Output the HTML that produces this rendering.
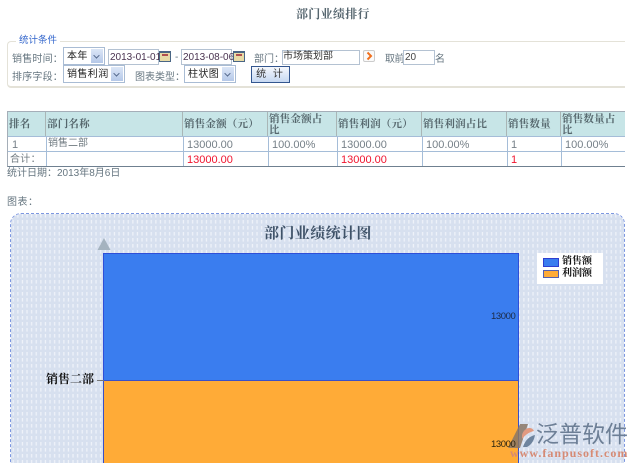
<!DOCTYPE html>
<html lang="zh">
<head>
<meta charset="utf-8">
<title>部门业绩排行</title>
<style>
html,body{margin:0;padding:0;background:#fff}
body{position:relative;width:638px;height:468px;overflow:hidden;font-family:"Liberation Sans","Noto Sans CJK SC",sans-serif;font-size:10px;color:#667680}
.a{position:absolute;white-space:nowrap;line-height:12px}
.sf{font-family:"Liberation Serif","Noto Serif CJK SC",serif;font-weight:bold}
.box{position:absolute;box-sizing:border-box;background:#fff;border:1px solid #b4c2d2;color:#333;white-space:nowrap}
.sel{position:absolute;box-sizing:border-box;background:#fff;border:1px solid #a9bcd4;color:#222;font-size:10px;line-height:18px;padding-left:3px;height:18px;letter-spacing:.4px}
.sel i{position:absolute;right:1px;top:1px;bottom:1px;width:12px;background:linear-gradient(#dbe6f7,#b5c8e8)}
.sel i:after{content:"";position:absolute;left:3px;top:4px;width:4px;height:4px;border-right:1.5px solid #4d6185;border-bottom:1.5px solid #4d6185;transform:rotate(45deg) scale(.9);transform-origin:center}
.cal{position:absolute;width:12px;height:11px;box-sizing:border-box;border:1px solid #4a6685;border-top-width:2px;background:#e8dba6;z-index:2}
.cal:after{content:"";position:absolute;left:2px;top:1px;width:6px;height:2px;background:#b05050}
.cell{position:absolute;box-sizing:border-box;white-space:normal;overflow:hidden}
.h{background:#c7e5e7;font-family:"Liberation Serif","Noto Serif CJK SC",serif;font-weight:bold;color:#55666c;font-size:10.5px;line-height:11px;letter-spacing:.2px;padding-left:1px;display:flex;align-items:center;border-right:1px solid #a9b6b6;white-space:nowrap}
.r{color:#768088;font-size:11px;line-height:13px;padding-left:3px}
.red{color:#f0142e}
.vl{position:absolute;width:1px;background:#a5bdd8}
.hl{position:absolute;height:1px;background:#a5bdd8}
#chart{position:absolute;left:10px;top:213px;width:614.5px;height:255px;box-sizing:border-box;border:1px dashed #7d97e0;border-bottom:0;border-radius:11px 11px 0 0;overflow:hidden}
#pat{position:absolute;inset:0}
</style>
</head>
<body>
<div class="a sf" style="left:296px;top:7px;font-size:12px;line-height:14px;color:#56666f;letter-spacing:.3px">部门业绩排行</div>

<div style="position:absolute;left:7px;top:41px;width:618px;height:47px;box-sizing:border-box;border:1px solid #e4e2d8;border-width:1px 0 2px 1px;border-radius:4px 0 0 4px"></div>
<div class="a" style="left:16px;top:35px;background:#fff;padding:0 3px;color:#3366cc;font-size:9.5px">统计条件</div>

<div class="a" style="left:12px;top:54px;letter-spacing:.2px">销售时间：</div>
<div class="sel" style="left:63px;top:47px;width:42px">本年<i></i></div>
<div class="box" style="left:108px;top:49px;width:51px;height:16px;font-size:10px;line-height:15px;padding-left:1px;color:#4a3350">2013-01-01</div>
<div class="cal" style="left:159px;top:51px"></div>
<div class="a" style="left:175px;top:52px">-</div>
<div class="box" style="left:181px;top:49px;width:51px;height:16px;font-size:10px;line-height:15px;padding-left:1px;color:#4a3350">2013-08-06</div>
<div class="cal" style="left:233px;top:51px"></div>
<div class="a" style="left:254px;top:54px">部门：</div>
<div class="box" style="left:282px;top:50px;width:78px;height:15px;font-size:10px;line-height:12px;padding-left:0;color:#333">市场策划部</div>
<div style="position:absolute;left:363px;top:50px;width:12px;height:12px;box-sizing:border-box;border:1px solid #ccc;border-radius:2px;background:#fafafa"></div>
<svg style="position:absolute;left:363px;top:50px" width="12" height="12"><path d="M4.5 2.5L8 6L4.5 9.5" fill="none" stroke="#f0701e" stroke-width="2"/></svg>
<div class="a" style="left:385px;top:54px;letter-spacing:-.5px">取前</div>
<div class="box" style="left:403px;top:50px;width:32px;height:15px;font-size:10px;line-height:13px;padding-left:1px;color:#444">20</div>
<div class="a" style="left:435px;top:54px">名</div>

<div class="a" style="left:12px;top:72px;letter-spacing:.2px">排序字段：</div>
<div class="sel" style="left:63px;top:65px;width:62px">销售利润<i></i></div>
<div class="a" style="left:135px;top:72px">图表类型：</div>
<div class="sel" style="left:184px;top:65px;width:52px">柱状图<i></i></div>
<div style="position:absolute;left:251px;top:66px;width:39px;height:17px;box-sizing:border-box;border:1px solid #33568f;background:linear-gradient(#f5f8fd,#c6d8f2);text-align:center;font-size:10px;line-height:15px;color:#333;letter-spacing:2px">统 计</div>

<!-- table -->
<div style="position:absolute;left:7px;top:111px;width:618px;height:56px;box-sizing:border-box;border:1px solid #a5aeb8;border-width:1px 0 1px 1px;border-bottom-color:#6f8090;background:#fff"></div>
<div class="cell h" style="left:8px;top:112px;width:38px;height:25px">排名</div>
<div class="cell h" style="left:46px;top:112px;width:137px;height:25px">部门名称</div>
<div class="cell h" style="left:183px;top:112px;width:85px;height:25px">销售金额（元）</div>
<div class="cell h" style="left:268px;top:112px;width:69px;height:25px"><span>销售金额占<br>比</span></div>
<div class="cell h" style="left:337px;top:112px;width:85px;height:25px">销售利润（元）</div>
<div class="cell h" style="left:422px;top:112px;width:85px;height:25px">销售利润占比</div>
<div class="cell h" style="left:507px;top:112px;width:54px;height:25px">销售数量</div>
<div class="cell h" style="left:561px;top:112px;width:64px;height:25px;border-right:0"><span>销售数量占<br>比</span></div>
<div class="hl" style="left:8px;top:136px;width:617px"></div>
<div class="hl" style="left:8px;top:151px;width:617px"></div>
<div class="vl" style="left:46px;top:137px;height:29px"></div>
<div class="vl" style="left:183px;top:137px;height:29px"></div>
<div class="vl" style="left:268px;top:137px;height:29px"></div>
<div class="vl" style="left:337px;top:137px;height:29px"></div>
<div class="vl" style="left:422px;top:137px;height:29px"></div>
<div class="vl" style="left:507px;top:137px;height:29px"></div>
<div class="vl" style="left:561px;top:137px;height:29px"></div>

<div class="a r" style="left:9px;top:139px">1</div>
<div class="a" style="left:48px;top:138px;color:#6f7a80">销售二部</div>
<div class="a r" style="left:184px;top:139px">13000.00</div>
<div class="a r" style="left:269px;top:139px">100.00%</div>
<div class="a r" style="left:338px;top:139px">13000.00</div>
<div class="a r" style="left:423px;top:139px">100.00%</div>
<div class="a r" style="left:508px;top:139px">1</div>
<div class="a r" style="left:562px;top:139px">100.00%</div>

<div class="a" style="left:10px;top:154px;color:#6f7a80;letter-spacing:.3px">合计：</div>
<div class="a r red" style="left:184px;top:154px">13000.00</div>
<div class="a r red" style="left:338px;top:154px">13000.00</div>
<div class="a r red" style="left:508px;top:154px">1</div>

<div class="a" style="left:7px;top:168px;color:#667680">统计日期：2013年8月6日</div>
<div class="a" style="left:7px;top:197px;color:#667680;letter-spacing:.5px">图表：</div>

<!-- chart -->
<div id="chart">
<svg id="pat" width="614" height="255" style="position:absolute;left:0;top:0">
<defs><pattern id="p" width="4.6" height="6" patternUnits="userSpaceOnUse">
<rect width="4.6" height="6" fill="#d7e0ef"/>
<rect x="1.6" y="0" width="1.3" height="3.6" fill="#eef2f9"/>
</pattern></defs>
<rect width="614" height="255" fill="url(#p)"/>
</svg>
</div>
<div style="position:absolute;left:0;top:463px;width:638px;height:5px;background:#fff"></div>

<div class="a sf" style="left:264px;top:225px;font-size:15px;line-height:18px;color:#3f5268;letter-spacing:.4px">部门业绩统计图</div>
<svg style="position:absolute;left:97px;top:238px" width="14" height="12"><path d="M7 0L13.5 12H.5Z" fill="#a5b3bf"/></svg>

<div style="position:absolute;left:103px;top:253px;width:416px;height:128px;box-sizing:border-box;background:#3a7def;border:1px solid #2f4fd8"></div>
<div style="position:absolute;left:103px;top:380px;width:416px;height:83px;box-sizing:border-box;background:#ffab37;border:1px solid #3a50c8;border-bottom:0"></div>
<div style="position:absolute;left:97px;top:380px;width:7px;height:1px;background:#777"></div>
<div class="a sf" style="left:46px;top:372px;font-size:12px;line-height:14px;color:#111">销售二部</div>
<div class="a" style="left:491px;top:311px;font-size:9.5px;letter-spacing:-.4px;color:#1c2a44">13000</div>

<div style="position:absolute;left:537px;top:253px;width:66px;height:31px;background:#fff"></div>
<div style="position:absolute;left:543px;top:258px;width:16px;height:9px;box-sizing:border-box;background:#3a7def;border:1px solid #2f3fd0"></div>
<div style="position:absolute;left:543px;top:270px;width:16px;height:8px;box-sizing:border-box;background:#ffab37;border:1px solid #5560b0"></div>
<div class="a sf" style="left:562px;top:256px;font-size:10px;color:#111">销售额</div>
<div class="a sf" style="left:562px;top:268px;font-size:10px;color:#111">利润额</div>

<!-- watermark -->
<svg style="position:absolute;left:506px;top:421px" width="30" height="30">
<path d="M2 27L14 3H22L14 27Z" fill="#8a7565" opacity=".85"/>
<path d="M16 14C18 6 26 5 28 10C24 11 20 13 16 18Z" fill="#e29a80"/>
<path d="M17 26C19 19 24 15 29 14C28 20 25 24 21 26Z" fill="#6e849e"/>
</svg>
<div class="a" style="left:491px;top:439px;font-size:9.5px;letter-spacing:-.4px;color:#2a2410">13000</div>
<div class="a" style="left:536px;top:421px;font-size:23px;line-height:26px;color:#6d7f96;letter-spacing:0">泛普软件</div>
<div class="a" style="left:510px;top:446px;font-family:'Liberation Serif',serif;font-size:12px;line-height:14px;font-weight:bold;color:#d68a74;letter-spacing:1px">www.fanpusoft.com</div>
</body>
</html>
